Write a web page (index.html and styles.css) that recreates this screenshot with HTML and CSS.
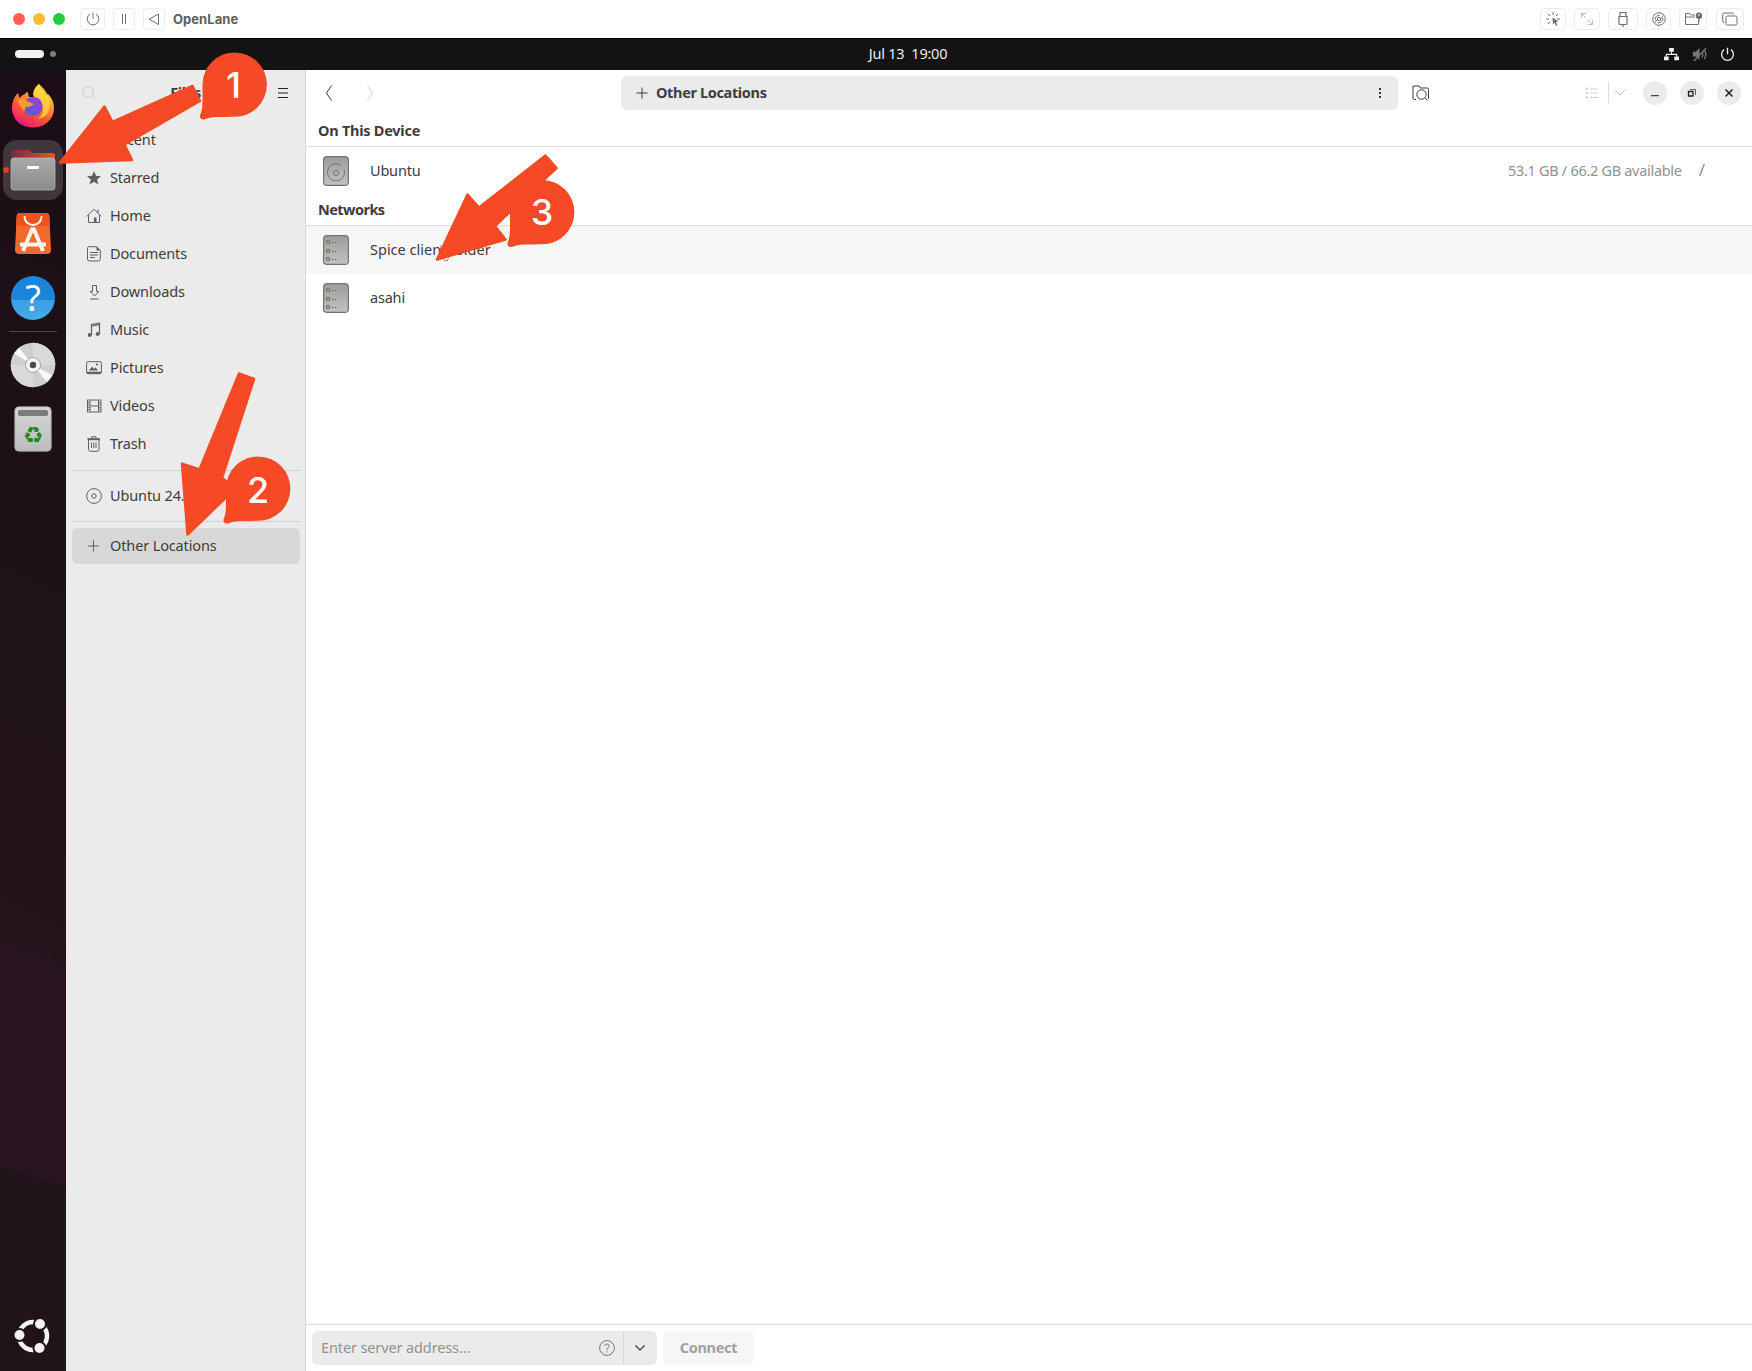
FILE: index.html
```html
<!DOCTYPE html>
<html lang="en">
<head>
<meta charset="utf-8">
<title>OpenLane</title>
<link rel="stylesheet" href="styles.css">
</head>
<body>
<svg class="defs" width="0" height="0" aria-hidden="true">
  <defs>
    <linearGradient id="fox" x1="0.8" y1="0" x2="0.3" y2="1"><stop offset="0" stop-color="#ffe14d"/><stop offset=".35" stop-color="#ffa02b"/><stop offset=".65" stop-color="#ff5634"/><stop offset="1" stop-color="#e5157f"/></linearGradient>
    <linearGradient id="globe" x1="0.8" y1="0" x2="0.3" y2="1"><stop offset="0" stop-color="#a03be0"/><stop offset="1" stop-color="#5360d8"/></linearGradient>
    <linearGradient id="grey" x1="0" y1="0" x2="0" y2="1"><stop offset="0" stop-color="#9d9d9d"/><stop offset="1" stop-color="#c2c2c2"/></linearGradient>
    <linearGradient id="folder" x1="0" y1="0" x2="0" y2="1"><stop offset="0" stop-color="#aaa"/><stop offset="1" stop-color="#8b8b8b"/></linearGradient>
    <linearGradient id="tab" x1="0" y1="0" x2="1" y2="0"><stop offset="0" stop-color="#7a2849"/><stop offset="1" stop-color="#e9541f"/></linearGradient>
    <linearGradient id="bin" x1="0" y1="0" x2="0" y2="1"><stop offset="0" stop-color="#d6d6d6"/><stop offset="1" stop-color="#bcbcbc"/></linearGradient>
    <symbol id="server" viewBox="0 0 26 30"><rect x=".6" y=".6" width="24.8" height="28.8" rx="3.5" fill="url(#grey)" stroke="#737373" stroke-width="1.2"/><g fill="#9fc24d" stroke="#666" stroke-width="1"><circle cx="5" cy="7" r="1.7"/><circle cx="5" cy="16" r="1.7"/><circle cx="5" cy="24" r="1.7"/></g><path d="M9 7.5h1.3M12 7.5h1.3M9 16.500h1.300M12 16.500h1.300M9 24.500h1.300M12 24.500h1.300" stroke="#555" stroke-width="1.2"/></symbol>
    <path id="bubble" d="M-32 0A32.200 32.200 0 1 1 0 32.300C-12 32.800 -22 31.500 -29 34.500C-33 36.500 -36 33 -34 29.500C-31.500 25 -32 14 -32 0Z"/>
  </defs>
</svg>

<header class="titlebar">
  <div class="lights"><i class="red"></i><i class="amber"></i><i class="green"></i></div>
  <span class="tool t1"><svg viewBox="0 0 16 16"><path d="M8 1.500v6.500M5.200 3A5.800 5.800 0 1 0 10.800 3"/></svg></span>
  <span class="tool t2"><svg viewBox="0 0 16 16"><path d="M6.500 3v10M9.500 3v10"/></svg></span>
  <span class="tool t3"><svg viewBox="0 0 16 16"><path d="M12.500 3v10.500L3 8.200z"/></svg></span>
  <strong>OpenLane</strong>
  <div class="tools">
    <span class="tool w26"><svg viewBox="0 0 16 16"><path d="M8 1v3M1 8h3M12 8h3M3 3l2 2M13 3l-2 2M3 13l2-2"/><path class="solid" d="M7.500 6.500l6 4-2.500.6 1.500 2.900-1.500.7-1.400-2.900-1.700 1.500z"/></svg></span>
    <span class="tool w26 faint"><svg viewBox="0 0 16 16"><path d="M2.500 7V2.500H7M3 3l4 4M9 13.500h4.500V9M13 13L9 9"/></svg></span>
    <span class="tool w30"><svg viewBox="0 0 16 16"><path d="M5 5.500V1.500h6v4M4 5.500h8v7q0 1-1 1H5q-1 0-1-1zM8 13.500V16" stroke-width="1.200"/></svg></span>
    <span class="tool w25"><svg viewBox="0 0 16 16"><circle cx="8" cy="8" r="6.300"/><circle cx="8" cy="8" r="1.700"/><path d="M4 9q0-4.500 5-5M12 7q0 4.500-5 5M6 9q-2 1-2 2.500M10 7q2-1 2-2.500"/></svg></span>
    <span class="tool w28"><svg class="wide" viewBox="0 0 19 16"><path d="M11 4H7L5.500 2.500H1.500v11h13V9M1.500 6H11"/><circle class="solid" cx="15" cy="4.800" r="3.200"/><circle cx="15" cy="4" r=".8" fill="#fff" stroke="none"/><path d="M15 7v4"/></svg></span>
    <span class="tool w29"><svg viewBox="0 0 16 16"><rect x="4" y="5" width="11" height="9" rx="1.500"/><path d="M2.500 11.500Q.7 11.500.7 10V3.500Q.7 2 2.200 2H10q1.500 0 1.500 1.500"/></svg></span>
  </div>
</header>

<div class="panel">
  <div class="spaces"><i></i><b></b></div>
  <time>Jul 13&nbsp; 19:00</time>
  <div class="status">
    <svg viewBox="0 0 16 16"><path d="M5.500 1h5v4h-5zM0 10h5v4H0zM11 10h5v4h-5z" fill="#f2f2f2"/><path d="M8 5v3M2.500 10V7.800h11V10" stroke="#f2f2f2" fill="none" stroke-width="1.200"/></svg>
    <svg viewBox="0 0 16 16" class="muted"><path d="M1 5h3l4-4v13l-4-4H1z" fill="#777"/><path d="M2 15L15 1M10.500 5q2 3 0 6M13 3q3.500 5 0 10" stroke="#777" fill="none" stroke-width="1.400"/></svg>
    <svg viewBox="0 0 16 16"><path d="M8 .8v7M4.300 2.800A6.300 6.300 0 1 0 11.700 2.800" fill="none" stroke="#f2f2f2" stroke-width="1.400"/></svg>
  </div>
</div>

<div class="desktop">
  <nav class="dock">
    <div class="app"><svg width="44" height="44" viewBox="0 0 44 44"><path d="M22 43.500C9 43.500 1 35 1 23.500C1 18 3 14 5 11L7 9L8.500 14Q11 11 14 10Q15 8 16.500 8L18 13H23Q21 6 28 0Q30 4 33 7L36 12L37 10Q43 16 43 24C43 35 34 43.500 22 43.500Z" fill="url(#fox)"/><path d="M28 0Q20 6 23 13Q31 15 32 22Q33 30 27 35Q38 33 39 22Q40 10 28 0Z" fill="#ffd93f" opacity=".8"/><circle cx="22" cy="22.500" r="9.500" fill="url(#globe)"/><path d="M7 17Q10 13 17 17.500L23 20Q20 23 15 23Q14 26 13 27Q9 23 7 17Z" fill="#ff9a2c"/><path d="M21 14Q27 12 30 17Q27 16 25 17Z" fill="#a03be0"/></svg></div>
    <div class="app active"><i></i><svg width="46" height="46" viewBox="0 0 46 46"><path d="M1 11V6q0-3 3-3h13q3 0 5 3h20q3 0 3 3v10H1z" fill="url(#tab)"/><rect x="1" y="11" width="44" height="32" rx="3" fill="url(#folder)" stroke="#b4b4b4" stroke-width=".8"/><rect x="17" y="19" width="12" height="3" rx="1" fill="#fff"/></svg></div>
    <div class="app"><svg width="38" height="44" viewBox="0 0 38 44"><path d="M6 1h26q3 0 3.300 3L37 38q0 4-4 4H5q-4 0-4-4L2.700 4Q3 1 6 1z" fill="#f2692c"/><path d="M6 1h26q3 0 3.300 3l.7 10H2L2.700 4Q3 1 6 1z" fill="#f0521c"/><path d="M10.500 4C10.500 16 27.500 16 27.500 4" stroke="#fff" stroke-width="1.800" fill="none"/><path d="M9 39L18 17.500h2L29 39M6 32.500h26" stroke="#fff4ec" stroke-width="4" fill="none"/></svg></div>
    <div class="app help"><span>?</span></div>
    <hr>
    <div class="app"><svg width="46" height="46" viewBox="0 0 46 46"><circle cx="23" cy="23" r="22.300" fill="#cfcfcf"/><path d="M23 23V.7A22.300 22.300 0 0 1 45.300 23zM23 23H.7A22.300 22.300 0 0 0 23 45.300z" fill="#d9d9d9"/><path d="M23 23L4 11.500 9 6zM23 23L42 33 37 40z" fill="#fafafa"/><circle cx="23" cy="23" r="7.500" fill="#f7f5f2" stroke="#aca595"/><circle cx="23" cy="23" r="3.200" fill="#4b4b4b"/></svg></div>
    <div class="app"><svg width="38" height="46" viewBox="0 0 38 46"><rect x=".8" y=".8" width="36.400" height="44.400" rx="4" fill="url(#bin)" stroke="#aaa" stroke-width=".8"/><rect x="4" y="4" width="30" height="6" rx="2" fill="#7b7b7b"/><text class="recycle" x="19" y="37">&#x267B;&#xFE0E;</text></svg></div>
    <div class="app launcher"><svg width="38" height="38" viewBox="0 0 38 38"><circle cx="19" cy="19" r="14" fill="none" stroke="#f3f3f3" stroke-width="4.500"/><g fill="#f3f3f3" stroke="#21131a" stroke-width="2"><circle cx="5.500" cy="18" r="6"/><circle cx="26" cy="7" r="6"/><circle cx="25.500" cy="31" r="6"/></g></svg></div>
  </nav>

  <aside class="sidebar">
    <div class="sidehead"><svg class="search" viewBox="0 0 16 16"><circle cx="6.500" cy="6.500" r="5.800"/><path d="M10.700 10.700L14 14"/></svg><strong>Files</strong><svg class="menu" viewBox="0 0 16 16"><path d="M3 3.500h10M3 8h10M3 12.500h10"/></svg></div>
    <ul>
      <li><svg viewBox="0 0 16 16"><circle cx="8" cy="8" r="6.500"/><path d="M8 4v4h3"/></svg><span>Recent</span></li>
      <li><svg viewBox="0 0 16 16"><path class="solid" d="M8 1l2 4.800 5 .4-3.800 3.300 1.200 5L8 11.800l-4.400 2.700 1.200-5L1 6.200l5-.4z"/></svg><span>Starred</span></li>
      <li><svg viewBox="0 0 16 16"><path d="M.7 8.500L8 1.200l7.300 7.300M2.500 7v7.500h11V7M12 1.500V5"/><path class="solid" d="M8 9.500h2.500v5H8z"/></svg><span>Home</span></li>
      <li><svg viewBox="0 0 16 16"><path d="M3 .7h7.500L14.300 4.500V13q0 2-2 2H3.500q-2 0-2-2V2.500Q1.500.7 3 .7zM4 6.500h8M4 9h8M4 11.500h5"/><path class="solid" d="M10.500.7v3.800h3.800z"/></svg><span>Documents</span></li>
      <li><svg viewBox="0 0 16 16"><path d="M6.500 1.500h4v6h2.300L8.500 12 4.200 7.500h2.300zM4 15h9"/></svg><span>Downloads</span></li>
      <li><svg viewBox="0 0 16 16"><path d="M5.500 13V2.500l8-1.300V12M5.500 4l8-1.300" stroke-width="1.200"/><circle class="solid" cx="3.700" cy="13" r="2"/><circle class="solid" cx="11.700" cy="12" r="2"/></svg><span>Music</span></li>
      <li><svg viewBox="0 0 16 16"><rect x=".6" y="1.700" width="14.800" height="12" rx="1.500"/><path class="solid" d="M1 11.700h14v2H1zM3 10.500l3-4 2 2.500 1.500-1.800 2.500 3.300z"/><circle class="solid" cx="11" cy="4.500" r="1.100"/></svg><span>Pictures</span></li>
      <li><svg viewBox="0 0 16 16"><path d="M4 2h8.500v12H4zM4 8h8.500M1.500 1.500v13M15 1.500v13"/><path d="M2.700 1.500v13M13.800 1.500v13" stroke-width="1.500" stroke-dasharray="1 1.400"/></svg><span>Videos</span></li>
      <li><svg viewBox="0 0 16 16"><path d="M2.500 4v9.300q0 2 2 2h6.500q2 0 2-2V4M5.500 6.500v5.500M7.800 6.500v5.500M10 6.500v5.500M5.500 2.500V.8h4.500v1.700"/><path d="M1.500 3.200h12.500" stroke-width="2"/></svg><span>Trash</span></li>
    </ul>
    <ul class="sep"><li><svg viewBox="0 0 16 16"><circle cx="8" cy="8" r="7.400"/><circle cx="8" cy="8" r="2.200"/></svg><span>Ubuntu 24.04</span></li></ul>
    <ul class="sep"><li class="selected"><svg viewBox="0 0 16 16"><path d="M7.500 2.500v11M2 8h11"/></svg><span class="loc">Other Locations</span></li></ul>
  </aside>

  <main>
    <div class="toolbar">
      <svg class="back" viewBox="0 0 8 16"><path d="M6.500.5L1.500 8l5 7.500"/></svg>
      <svg class="fwd" viewBox="0 0 8 16"><path d="M1.500.5l5 7.500-5 7.500"/></svg>
      <div class="path"><svg viewBox="0 0 12 12"><path d="M6 .5v11M.5 6h11"/></svg><strong>Other Locations</strong><i class="dots"></i></div>
      <svg class="find" viewBox="0 0 18 16"><path d="M4 14.500H2.500q-1.500 0-1.500-1.500V1h6l1.500 2H15q1.500 0 1.500 1.500v9.500"/><circle cx="9.500" cy="9.500" r="4.700"/><path d="M13 13l2.500 2.500"/></svg>
      <svg class="list" viewBox="0 0 14 12"><path d="M1 1h1.500v1.500H1zM1 5h1.500v1.500H1zM1 9.500h1.500V11H1zM5 2h8M5 6h8M5 10.500h8"/></svg>
      <i class="vline"></i>
      <svg class="chev" viewBox="0 0 12 8"><path d="M1 1l5 5 5-5"/></svg>
      <div class="wins"><span><svg viewBox="0 0 12 12"><path d="M2 8.700h8"/></svg></span><span><svg viewBox="0 0 12 12"><path d="M2.500 4.500h4.500v4.500H2.500z" stroke-width="1.300"/><path d="M4 2.500h5.500v5.500" stroke-width=".7"/></svg></span><span><svg viewBox="0 0 12 12"><path d="M2.500 2.500l7 7M9.500 2.500l-7 7" stroke-width="1.500"/></svg></span></div>
    </div>
    <h2>On This Device</h2>
    <div class="row"><svg viewBox="0 0 26 30"><rect x=".6" y=".6" width="24.800" height="28.800" rx="3.500" fill="url(#grey)" stroke="#737373" stroke-width="1.200"/><path d="M18 9.500A8.500 8.500 0 1 0 21 13.500" fill="none" stroke="#717171"/><circle cx="13" cy="17" r="2.500" fill="none" stroke="#717171"/></svg><span>Ubuntu</span><em>53.1 GB / 66.2 GB available</em><b>/</b></div>
    <h2 class="networks">Networks</h2>
    <div class="row hover"><svg><use href="#server"/></svg><span class="spice">Spice client folder</span></div>
    <div class="row"><svg><use href="#server"/></svg><span>asahi</span></div>
    <footer>
      <div class="entry"><span>Enter server address…</span><svg class="q" viewBox="0 0 16 16"><circle cx="8" cy="8" r="7.400"/><path d="M5.800 6q.2-2 2.200-2t2.200 1.800Q10.200 7 8 8.500V10M8 11.200v1.300"/></svg><i></i><svg class="down" viewBox="0 0 12 8"><path d="M1.500 1.500l4.500 4.500 4.500-4.500"/></svg></div>
      <button><span>Connect</span></button>
    </footer>
  </main>
</div>

<svg class="marks" width="1752" height="1371" viewBox="0 0 1752 1371">
  <path d="M441 245l-1 10 3 2 1.500 3.500h3l1-3.500" fill="#fff" stroke="#777" stroke-width=".8"/>
  <g class="arrows">
    <path d="M60 162.500L104.500 106.500 112.500 122 192.500 86 200 101 124.500 144.500 132 160z"/>
    <path d="M187.500 534.500L182 463.700 199.500 469.500 239 373.500 254 379 222 478 236 488z"/>
    <path d="M437 259.500L467.500 194.500 479 207.500 545.500 155.500 556.500 168 495 226 505.500 239.500z"/>
    <use href="#bubble" x="234.500" y="84.500"/><use href="#bubble" x="258" y="488.500"/><use href="#bubble" x="542" y="212"/>
  </g>
  <g class="nums"><text x="233.500" y="98">1</text><text x="258" y="502.500">2</text><text x="542" y="225">3</text></g>
</svg>
</body>
</html>
```
FILE: styles.css
```css
* { box-sizing: border-box; }
body { margin: 0; width: 1752px; height: 1371px; overflow: hidden; position: relative; display: flex; flex-direction: column; background: #fff; color: #3d3d3d; font: 14.5px/20px "Noto Sans", sans-serif; }
svg { display: block; flex: none; fill: none; stroke: currentColor; stroke-width: 1; }
i, em { font-style: normal; }
.solid { fill: currentColor; stroke: none; }
.defs { position: absolute; }

.titlebar { height: 38px; flex: none; display: flex; align-items: center; padding: 0 8px 0 13px; background: #fff; color: #6e6e6e; }
.lights { display: flex; gap: 8px; margin-right: 15px; }
.lights i { width: 12px; height: 12px; border-radius: 50%; }
.red { background: #ff5f57; }
.amber { background: #febc2e; }
.green { background: #28c840; }
.tool { height: 22px; border: 1px solid #ececec; border-radius: 4px; display: flex; align-items: center; justify-content: center; }
.tool svg { width: 16px; height: 16px; }
.tool svg.wide { width: 19px; }
.t1 { width: 25px; margin-right: 8px; }
.t2 { width: 22px; margin-right: 8px; }
.t3 { width: 22px; margin-right: 8px; }
.titlebar strong { font: bold 13px/20px Inter, sans-serif; color: #5e5e5e; letter-spacing: .05px; }
.tools { margin-left: auto; display: flex; gap: 8.6px; }
.w26 { width: 25.5px; } .w30 { width: 29.500px; } .w25 { width: 24.500px; } .w28 { width: 27.500px; } .w29 { width: 28.500px; }
.faint { color: #bdbdbd; }

.panel { height: 32px; flex: none; background: #131313; border-top: 1px solid #000; color: #eee; display: grid; grid-template-columns: 1fr auto 1fr; align-items: center; padding: 0 17px 1px 15px; }
.spaces { display: flex; align-items: center; gap: 6px; }
.spaces i { width: 29px; height: 8px; border-radius: 4px; background: #f2f2f2; }
.spaces b { width: 6px; height: 6px; border-radius: 50%; background: #808080; }
.panel time { font-size: 14.5px; letter-spacing: -.25px; margin: -2px 0 0 66px; line-height: 20px; }
.status { display: flex; justify-content: flex-end; gap: 13px; }
.status svg { width: 15px; height: 15px; stroke: none; }

.desktop { flex: 1; display: flex; min-height: 0; }
.dock { width: 66px; flex: none; display: flex; flex-direction: column; align-items: center; padding-top: 4px; background: linear-gradient(197deg, transparent 84.500%, #21131a 84.500%), linear-gradient(204deg, #1b0d15 0, #1e1218 35%, #23131a 67.300%, #28151f 67.300%); }
.dock svg { stroke: none; }
.app { width: 60px; height: 60px; margin: 2px 0; flex: none; display: flex; align-items: center; justify-content: center; }
.active { background: #41363c; border-radius: 14px; position: relative; }
.active i { position: absolute; left: 0; top: 27px; width: 6px; height: 6px; border-radius: 50%; background: #d84614; }
.help span { width: 44px; height: 44px; border-radius: 50%; background: linear-gradient(#1c84da 0 54%, #39a0e4 54%, #48aae8); color: #fff; text-align: center; font: 36px/44px "Noto Sans", sans-serif; }
.recycle { fill: #1d8a1d; font: 23px "DejaVu Sans", sans-serif; text-anchor: middle; }
.dock hr { width: 48px; height: 1px; border: 0; margin: 1px 0; background: #504850; flex: none; }
.launcher { margin-top: auto; margin-bottom: 5px; }

.sidebar { width: 240px; flex: none; background: #ebebeb; border-right: 1px solid #d8d8d8; padding: 0 5px 0 6px; }
.sidehead { height: 51px; padding: 0 9px 5px 10px; display: flex; align-items: center; justify-content: space-between; }
.sidehead svg { width: 15px; height: 15px; }
.search { color: #c9c9c9; }
.sidehead strong { font-size: 14.500px; letter-spacing: -.4px; margin: -2px 1px 0 0; }
.sidehead .menu { width: 16px; height: 16px; color: #222; stroke-width: 1.100; }
.sidebar ul { list-style: none; margin: 0; padding: 0; }
.sidebar li { height: 38px; display: flex; align-items: center; padding-left: 14px; gap: 8px; letter-spacing: -.13px; }
.sidebar li svg { width: 16px; height: 16px; color: #606060; }
.sidebar li span { padding-bottom: 2px; }
.sidebar .sep { margin-top: 7px; border-top: 1px solid #cfcfcf; padding-top: 6px; }
.sidebar .sep li { height: 37px; }
.sidebar .sep li.selected { height: 36px; background: #d8d8d8; border-radius: 6px; }

main { flex: 1; display: flex; flex-direction: column; min-width: 0; }
.toolbar { height: 46px; flex: none; display: flex; align-items: center; padding: 0 11px 0 19px; }
.back, .fwd { width: 8px; height: 16px; }
.fwd { margin-left: 33px; color: #d4d4d4; }
.path { width: 777px; height: 34px; margin-left: 247px; border-radius: 6px; background: #ebebeb; display: flex; align-items: center; padding: 0 17px 0 15px; }
.path svg { width: 12px; height: 12px; margin-right: 8px; }
.path strong { letter-spacing: -.35px; padding-bottom: 2px; }
.dots { width: 2px; height: 2px; background: #333; box-shadow: 0 -4px #333, 0 4px #333; margin-left: auto; }
.find { width: 18px; height: 16px; margin-left: 14px; }
.list { width: 14px; height: 12px; margin-left: 155px; color: #d0d0d0; }
.vline { width: 1px; height: 22px; background: #dcdcdc; margin-left: 9px; }
.chev { width: 12px; height: 8px; margin-left: 5px; color: #bbb; }
.wins { display: flex; gap: 13px; margin-left: auto; }
.wins span { width: 24px; height: 24px; border-radius: 50%; background: #ebebeb; display: flex; align-items: center; justify-content: center; color: #222; }
.wins svg { width: 12px; height: 12px; }
h2 { height: 31px; font-size: 14.500px; line-height: 28px; margin: 0; padding-left: 12px; border-bottom: 1px solid #dcdcdc; flex: none; letter-spacing: -.25px; }
.networks { letter-spacing: -.55px; }
.row { height: 48px; flex: none; display: flex; align-items: center; padding: 0 47px 0 17px; }
.row svg { width: 26px; height: 30px; margin-right: 21px; stroke: none; }
.row span, .row em { padding-bottom: 2px; letter-spacing: -.2px; }
.row .spice { letter-spacing: 0; }
.row em { margin-left: auto; color: #929292; letter-spacing: -.3px; }
.row b { font-weight: normal; font-size: 17px; color: #929292; margin-left: 17px; padding-bottom: 2px; }
.hover { background: #f6f6f6; }
footer { margin-top: auto; height: 47px; border-top: 1px solid #dcdcdc; display: flex; padding: 6px; gap: 6px; }
.entry { width: 345px; height: 34px; background: #ebebeb; border-radius: 6px; display: flex; align-items: center; padding: 0 11px 0 9px; color: #929292; letter-spacing: -.12px; }
.entry span { padding-bottom: 2px; }
.q { width: 16px; height: 16px; margin-left: auto; margin-right: 8px; color: #777; }
.entry i { width: 1px; height: 34px; background: #d6d6d6; margin-right: 10px; }
.down { width: 12px; height: 8px; color: #333; stroke-width: 1.100; }
footer button { width: 91px; height: 34px; border: 0; border-radius: 6px; background: #f6f6f6; color: #a0a0a0; font: bold 14.500px "Noto Sans", sans-serif; letter-spacing: -.3px; padding: 0 0 2px; }

.marks { position: absolute; left: 0; top: 0; stroke: none; }
.arrows { fill: #f54a25; }
.arrows path { stroke: #f54a25; stroke-width: 2.500; stroke-linejoin: round; }
.arrows use { stroke: none; }
.arrows use { stroke-width: 0; }
.nums { fill: #fff; font: 500 36px Inter, sans-serif; text-anchor: middle; }
```
